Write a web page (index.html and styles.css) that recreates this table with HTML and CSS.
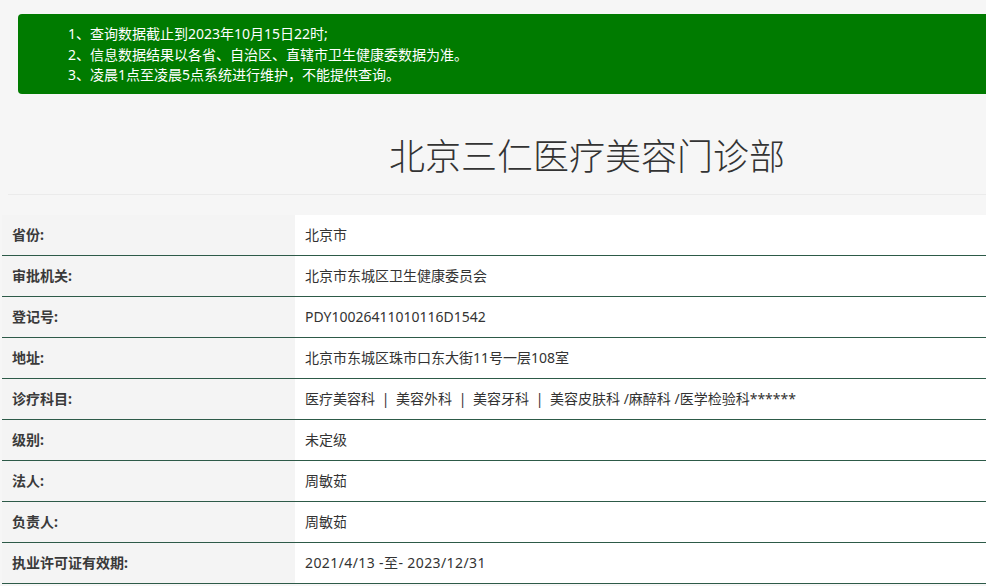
FILE: index.html
```html
<!DOCTYPE html>
<html lang="zh-CN">
<head>
<meta charset="utf-8">
<title>北京三仁医疗美容门诊部</title>
<link rel="stylesheet" href="styles.css">
</head>
<body>
<div class="notice">
  <p>1、查询数据截止到2023年10月15日22时;</p>
  <p>2、信息数据结果以各省、自治区、直辖市卫生健康委数据为准。</p>
  <p>3、凌晨1点至凌晨5点系统进行维护，不能提供查询。</p>
</div>
<div class="head">
  <h1 class="title">北京三仁医疗美容门诊部</h1>
</div>
<div class="info">
  <div class="row"><div class="label">省份:</div><div class="value">北京市</div></div>
  <div class="row"><div class="label">审批机关:</div><div class="value">北京市东城区卫生健康委员会</div></div>
  <div class="row"><div class="label">登记号:</div><div class="value">PDY10026411010116D1542</div></div>
  <div class="row"><div class="label">地址:</div><div class="value">北京市东城区珠市口东大街11号一层108室</div></div>
  <div class="row"><div class="label">诊疗科目:</div><div class="value">医疗美容科 <span class="sep">|</span> 美容外科 <span class="sep">|</span> 美容牙科 <span class="sep">|</span> 美容皮肤科 /麻醉科 /医学检验科******</div></div>
  <div class="row"><div class="label">级别:</div><div class="value">未定级</div></div>
  <div class="row"><div class="label">法人:</div><div class="value">周敏茹</div></div>
  <div class="row"><div class="label">负责人:</div><div class="value">周敏茹</div></div>
  <div class="row"><div class="label">执业许可证有效期:</div><div class="value num">2021/4/13 -至- 2023/12/31</div></div>
</div>
</body>
</html>
```
FILE: styles.css
```css
html, body {
  margin: 0;
  padding: 0;
}
body {
  background: #f6f6f6;
  font-family: "Noto Sans", "Noto Sans CJK SC", sans-serif;
  font-size: 14px;
  color: #333;
  overflow: hidden;
}
.notice {
  margin: 14px 0 0 18px;
  height: 80px;
  box-sizing: border-box;
  padding: 10px 0 0 50px;
  background: #007b00;
  border-radius: 4px 0 0 4px;
  color: #fff;
}
.notice p {
  margin: 0;
  font-size: 14px;
  line-height: 20.5px;
}
.head {
  margin: 0 0 0 8px;
  padding: 38px 0 12px 180px;
  border-bottom: 1px solid #ebebeb;
}
.title {
  margin: 0;
  font-size: 36px;
  font-weight: 300;
  line-height: 50px;
  text-align: center;
  color: #333;
}
.info {
  margin: 20px 0 0 2px;
}
.row {
  display: flex;
  height: 41px;
  box-sizing: border-box;
  border-bottom: 1px solid #2d5a48;
}
.label {
  width: 293px;
  flex: none;
  box-sizing: border-box;
  padding-left: 10px;
  line-height: 40px;
  font-weight: bold;
  color: #3a3a3a;
  background: #f4f4f4;
}
.value {
  flex: 1;
  padding-left: 10px;
  line-height: 40px;
  background: #fff;
  color: #333;
}
.num {
  letter-spacing: 0.4px;
}
.sep {
  margin: 0 3px;
}
```
